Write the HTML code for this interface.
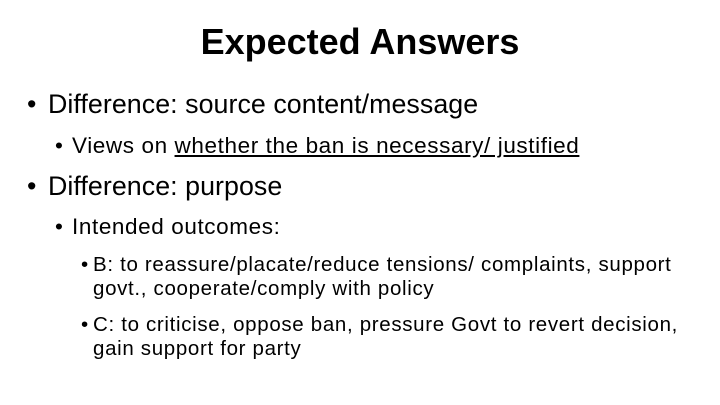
<!DOCTYPE html>
<html><head><style>
body{margin:0;width:720px;height:405px;background:#fff;font-family:"Liberation Sans",Arial,sans-serif;color:#000;position:relative;overflow:hidden}
div{position:absolute;white-space:nowrap}
.t{left:0;width:720px;text-align:center;font-weight:bold;font-size:36px;top:20px;line-height:44px}
.l1{font-size:26.8px;line-height:30px;letter-spacing:0.05px}
.l2{font-size:22.5px;line-height:26px;letter-spacing:0.6px}
.l3{font-size:20.5px;line-height:24px;letter-spacing:0.67px}
u{text-decoration:underline;text-underline-offset:2px}
</style></head><body>
<div class="t">Expected Answers</div>
<div class="l1" style="left:27px;top:89px">•</div>
<div class="l1" style="left:48px;top:89px">Difference: source content/message</div>
<div class="l2" style="left:55px;top:133px">•</div>
<div class="l2" style="left:72px;top:133px">Views on <u>whether the ban is necessary/ justified</u></div>
<div class="l1" style="left:27px;top:171px">•</div>
<div class="l1" style="left:48px;top:171px">Difference: purpose</div>
<div class="l2" style="left:55px;top:214px">•</div>
<div class="l2" style="left:72px;top:214px">Intended outcomes:</div>
<div class="l3" style="left:81px;top:253px">•</div>
<div class="l3" style="left:93px;top:253px">B: to reassure/placate/reduce tensions/ complaints, support</div>
<div class="l3" style="left:93px;top:277px">govt., cooperate/comply with policy</div>
<div class="l3" style="left:81px;top:313px">•</div>
<div class="l3" style="left:93px;top:313px">C: to criticise, oppose ban, pressure Govt to revert decision,</div>
<div class="l3" style="left:93px;top:337px">gain support for party</div>
</body></html>
